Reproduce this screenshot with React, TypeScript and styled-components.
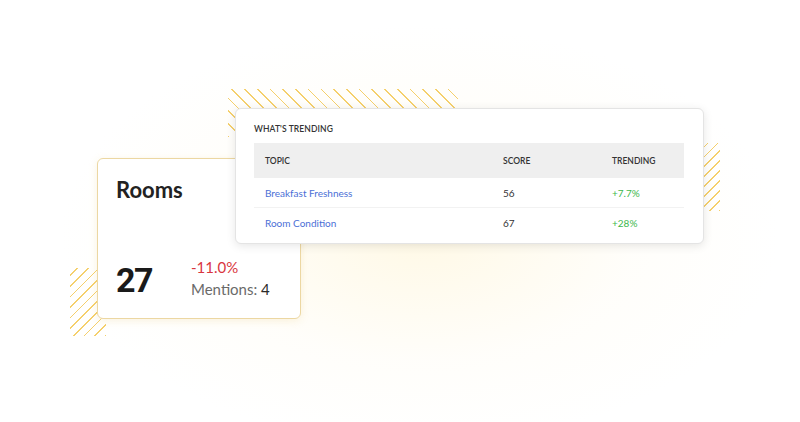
import React from "react";
import styled, { createGlobalStyle } from "styled-components";

const Global = createGlobalStyle`
  html, body { margin: 0; padding: 0; background: #ffffff; }
  body { font-family: "Lato", "Open Sans", sans-serif; overflow: hidden; }
  * { box-sizing: border-box; }
`;

const Stage = styled.div`
  position: relative;
  width: 800px;
  height: 422px;
  overflow: hidden;
  background:
    radial-gradient(ellipse 360px 210px at 420px 235px, rgba(255, 238, 185, 0.36), rgba(255, 246, 222, 0.14) 60%, rgba(255, 255, 255, 0) 100%),
    #ffffff;
  display: grid;
  grid-template-columns: 97px 138px 66px 403px 1fr;
  grid-template-rows: 108px 50px 86px 75px 1fr;
`;

const Stripes = styled.div<{ $x: number; $y: number; $w: number; $h: number; $dir: "back" | "fwd"; $gap: number }>`
  position: absolute;
  left: ${(p) => p.$x}px;
  top: ${(p) => p.$y}px;
  width: ${(p) => p.$w}px;
  height: ${(p) => p.$h}px;
  z-index: 0;
  background: repeating-linear-gradient(
    ${(p) => (p.$dir === "back" ? "45deg" : "-45deg")},
    rgba(242, 196, 72, 0.8) 0px,
    rgba(242, 196, 72, 0.8) 1.2px,
    rgba(242, 196, 72, 0) 1.2px,
    rgba(242, 196, 72, 0) ${(p) => p.$gap}px
  );
`;

const RoomsCard = styled.section`
  grid-column: 2 / 4;
  grid-row: 3 / 5;
  z-index: 1;
  background: #ffffff;
  border: 1px solid #ecd7a2;
  border-radius: 6px;
  box-shadow: 0 2px 8px rgba(230, 190, 90, 0.18);
  padding: 18px 18px 20px 18px;
  display: flex;
  flex-direction: column;
  justify-content: space-between;
`;

const RoomsTitle = styled.h2`
  margin: 0;
  font-family: "Lato", sans-serif;
  font-weight: 700;
  font-size: 22px;
  line-height: 26px;
  color: #222222;
`;

const StatRow = styled.div`
  display: flex;
  align-items: center;
`;

const BigNumber = styled.div`
  width: 75px;
  padding-top: 4px;
  font-family: "Roboto", sans-serif;
  font-weight: 700;
  font-size: 34px;
  line-height: 1;
  letter-spacing: -1.5px;
  color: #1a1a1a;
`;

const StatCol = styled.div`
  display: flex;
  flex-direction: column;
  gap: 4px;
  font-family: "Lato", sans-serif;
  font-size: 15px;
  line-height: 18px;
`;

const Delta = styled.span`
  color: #d9363e;
`;

const Mentions = styled.span`
  color: #6a6a6a;
  b { font-weight: 400; color: #2a2a2a; }
`;

const TrendCard = styled.section`
  grid-column: 3 / 5;
  grid-row: 2 / 4;
  z-index: 2;
  background: #ffffff;
  border: 1px solid #e4e4e4;
  border-radius: 6px;
  box-shadow: 0 2px 10px rgba(0, 0, 0, 0.1);
  padding: 14px 19px 0 18px;
  display: flex;
  flex-direction: column;
`;

const TrendTitle = styled.h3`
  margin: 0 0 8px 0;
  font-family: "Lato", sans-serif;
  font-weight: 600;
  font-size: 8.5px;
  line-height: 12px;
  letter-spacing: 0.1px;
  color: #333333;
  text-transform: uppercase;
`;

const Row = styled.div<{ $head?: boolean }>`
  display: grid;
  grid-template-columns: 238px 109px 1fr;
  align-items: center;
  padding-left: 11px;
  height: ${(p) => (p.$head ? 35 : 30)}px;
  background: ${(p) => (p.$head ? "#efefef" : "transparent")};
  border-bottom: ${(p) => (p.$head ? "none" : "1px solid #f2f2f2")};
  &:last-child { border-bottom: none; }
`;

const HeadCell = styled.span`
  font-family: "Lato", sans-serif;
  font-weight: 600;
  font-size: 8.5px;
  color: #333333;
  text-transform: uppercase;
`;

const Cell = styled.span<{ $tone?: "link" | "up" | "plain" }>`
  font-family: "Lato", sans-serif;
  font-size: 10px;
  color: ${(p) => (p.$tone === "link" ? "#4b6fd6" : p.$tone === "up" ? "#3cb84c" : "#333333")};
`;

const rows = [
  { topic: "Breakfast Freshness", score: 56, trend: "+7.7%" },
  { topic: "Room Condition", score: 67, trend: "+28%" },
];

export default function App() {
  return (
    <>
      <Global />
      <Stage>
        <Stripes $x={228} $y={89} $w={230} $h={48} $dir="back" $gap={9} />
        <Stripes $x={700} $y={143} $w={20} $h={68} $dir="fwd" $gap={7} />
        <Stripes $x={70} $y={268} $w={36} $h={68} $dir="fwd" $gap={7.5} />
        <RoomsCard>
          <RoomsTitle>Rooms</RoomsTitle>
          <StatRow>
            <BigNumber>27</BigNumber>
            <StatCol>
              <Delta>-11.0%</Delta>
              <Mentions>
                Mentions: <b>4</b>
              </Mentions>
            </StatCol>
          </StatRow>
        </RoomsCard>
        <TrendCard>
          <TrendTitle>What's Trending</TrendTitle>
          <div>
            <Row $head>
              <HeadCell>Topic</HeadCell>
              <HeadCell>Score</HeadCell>
              <HeadCell>Trending</HeadCell>
            </Row>
            {rows.map((r) => (
              <Row key={r.topic}>
                <Cell $tone="link">{r.topic}</Cell>
                <Cell $tone="plain">{r.score}</Cell>
                <Cell $tone="up">{r.trend}</Cell>
              </Row>
            ))}
          </div>
        </TrendCard>
      </Stage>
    </>
  );
}
